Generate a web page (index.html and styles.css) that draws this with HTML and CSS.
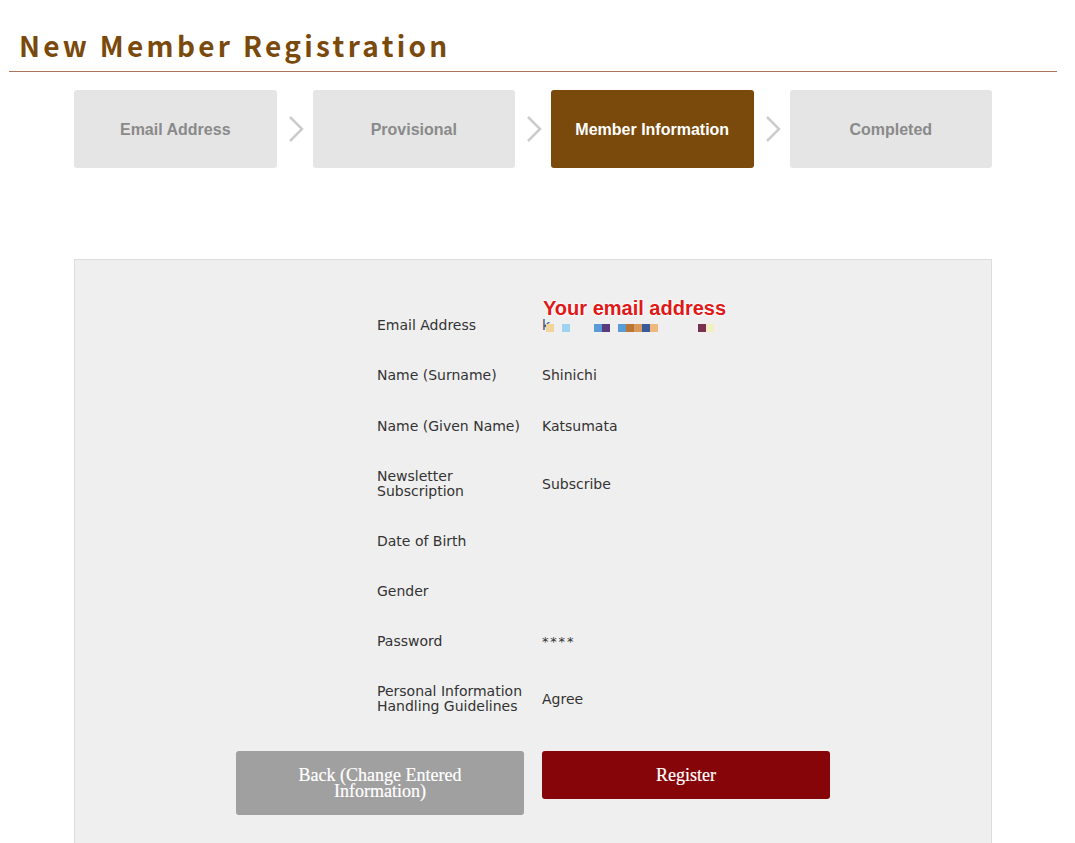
FILE: index.html
```html
<!DOCTYPE html>
<html lang="en">
<head>
<meta charset="utf-8">
<title>New Member Registration</title>
<link rel="stylesheet" href="styles.css">
</head>
<body>
<div class="page">
  <header class="page-header">
    <h1 class="page-title">New Member Registration</h1>
  </header>

  <ol class="steps">
    <li class="step">Email Address</li>
    <li class="step-arrow"><svg width="16" height="26" viewBox="0 0 16 26"><path d="M2 1 L14 13 L2 25" fill="none" stroke="#cccccc" stroke-width="2.5"/></svg></li>
    <li class="step">Provisional</li>
    <li class="step-arrow"><svg width="16" height="26" viewBox="0 0 16 26"><path d="M2 1 L14 13 L2 25" fill="none" stroke="#cccccc" stroke-width="2.5"/></svg></li>
    <li class="step step-active">Member Information</li>
    <li class="step-arrow"><svg width="16" height="26" viewBox="0 0 16 26"><path d="M2 1 L14 13 L2 25" fill="none" stroke="#cccccc" stroke-width="2.5"/></svg></li>
    <li class="step">Completed</li>
  </ol>

  <section class="panel">
    <div class="form">
      <dl class="fields">
        <div class="row">
          <dt class="label">Email Address</dt>
          <dd class="value value-email">
            <span class="note">Your email address</span>
            <span class="mosaic">
              <span class="k">k</span>
              <span class="px px-first" style="background:#f0d49a"></span>
              <span class="px gap1" style="background:#9ed3f0"></span>
              <span class="px gap3" style="background:#5a9ad6"></span>
              <span class="px" style="background:#5a3a7a"></span>
              <span class="px gap1" style="background:#5a9ad6"></span>
              <span class="px" style="background:#b87834"></span>
              <span class="px" style="background:#d9995a"></span>
              <span class="px" style="background:#3a5a9a"></span>
              <span class="px" style="background:#f0b87a"></span>
              <span class="px gap5" style="background:#7a3050"></span>
              <span class="px" style="background:#f2f0c0"></span>
            </span>
          </dd>
        </div>
        <div class="row">
          <dt class="label">Name (Surname)</dt>
          <dd class="value">Shinichi</dd>
        </div>
        <div class="row row-given">
          <dt class="label">Name (Given Name)</dt>
          <dd class="value">Katsumata</dd>
        </div>
        <div class="row">
          <dt class="label">Newsletter<br>Subscription</dt>
          <dd class="value">Subscribe</dd>
        </div>
        <div class="row">
          <dt class="label">Date of Birth</dt>
          <dd class="value"></dd>
        </div>
        <div class="row">
          <dt class="label">Gender</dt>
          <dd class="value"></dd>
        </div>
        <div class="row">
          <dt class="label">Password</dt>
          <dd class="value value-password">****</dd>
        </div>
        <div class="row">
          <dt class="label">Personal Information<br>Handling Guidelines</dt>
          <dd class="value">Agree</dd>
        </div>
      </dl>
      <div class="actions">
        <button class="btn btn-back" type="button">Back (Change Entered<br>Information)</button>
        <button class="btn btn-register" type="button">Register</button>
      </div>
    </div>
  </section>
</div>
</body>
</html>
```

FILE: styles.css
```css
html, body {
  margin: 0;
  padding: 0;
  background: #ffffff;
}

.page {
  width: 1066px;
  padding-top: 26px;
}

.page-header {
  margin: 0 9px 0 9px;
  padding: 0 0 0 10px;
  border-bottom: 1px solid #a8775e;
  height: 45px;
}

.page-title {
  margin: 0;
  font-family: "Noto Sans CJK JP", "Noto Sans", sans-serif;
  font-weight: 700;
  font-size: 28px;
  line-height: 38px;
  letter-spacing: 3.3px;
  color: #7a4a0c;
}

.steps {
  list-style: none;
  margin: 18px auto 0;
  padding: 0;
  width: 918px;
  display: flex;
  align-items: center;
}

.step {
  flex: 1 1 0;
  height: 78px;
  padding-top: 1px;
  box-sizing: border-box;
  border-radius: 3px;
  background: #e5e5e5;
  color: #8a8a8a;
  font-family: "Liberation Sans", Arial, sans-serif;
  font-weight: 700;
  font-size: 16px;
  display: flex;
  align-items: center;
  justify-content: center;
}

.step-active {
  background: #7a4a0c;
  color: #ffffff;
}

.step-arrow {
  width: 36px;
  flex: 0 0 36px;
  display: flex;
  justify-content: center;
  align-items: center;
}

.step-arrow svg {
  display: block;
  margin-left: 2px;
}

.panel {
  width: 916px;
  margin: 91px auto 0;
  background: #efefef;
  border: 1px solid #dddddd;
  padding: 41px 0 40px;
}

.form {
  width: 594px;
  margin: 0 auto;
}

.fields {
  margin: 0 0 0 141px;
  padding: 0;
}

.row {
  display: grid;
  grid-template-columns: 165px 1fr;
  align-items: center;
  padding: 17px 0 18px;
  font-family: "DejaVu Sans", Verdana, sans-serif;
  font-size: 14px;
  line-height: 15px;
  color: #333333;
}

.row-given {
  padding-top: 18px;
}

.label,
.value {
  margin: 0;
  min-height: 15px;
}

.value-password {
  letter-spacing: 1.8px;
  font-size: 13px;
}

.value-email {
  position: relative;
}

.note {
  position: absolute;
  left: 1px;
  top: -22px;
  font-family: "Liberation Sans", Arial, sans-serif;
  font-weight: 700;
  font-size: 20px;
  line-height: 24px;
  color: #e01818;
  white-space: nowrap;
  text-shadow: 0 0 2px #ffffff, 0 0 2px #ffffff, 0 0 3px #ffffff;
}

.mosaic {
  display: flex;
  align-items: flex-end;
  height: 15px;
}

.k {
  color: #3a4a7a;
  line-height: 15px;
}

.px {
  width: 8px;
  height: 8px;
  margin-bottom: 1px;
}

.px-first { margin-left: -4px; }
.gap1 { margin-left: 8px; }
.gap3 { margin-left: 24px; }
.gap5 { margin-left: 40px; }

.actions {
  display: flex;
  gap: 18px;
  align-items: flex-start;
  margin-top: 19px;
}

.btn {
  flex: 1 1 0;
  border: 0;
  border-radius: 3px;
  padding: 16px 10px;
  color: #ffffff;
  font-family: "Liberation Serif", "Times New Roman", serif;
  font-size: 18px;
  line-height: 16px;
  text-align: center;
  -webkit-text-stroke: 0.2px #ffffff;
  cursor: pointer;
}

.btn-back {
  background: #a0a0a0;
}

.btn-register {
  background: #850508;
}
```
